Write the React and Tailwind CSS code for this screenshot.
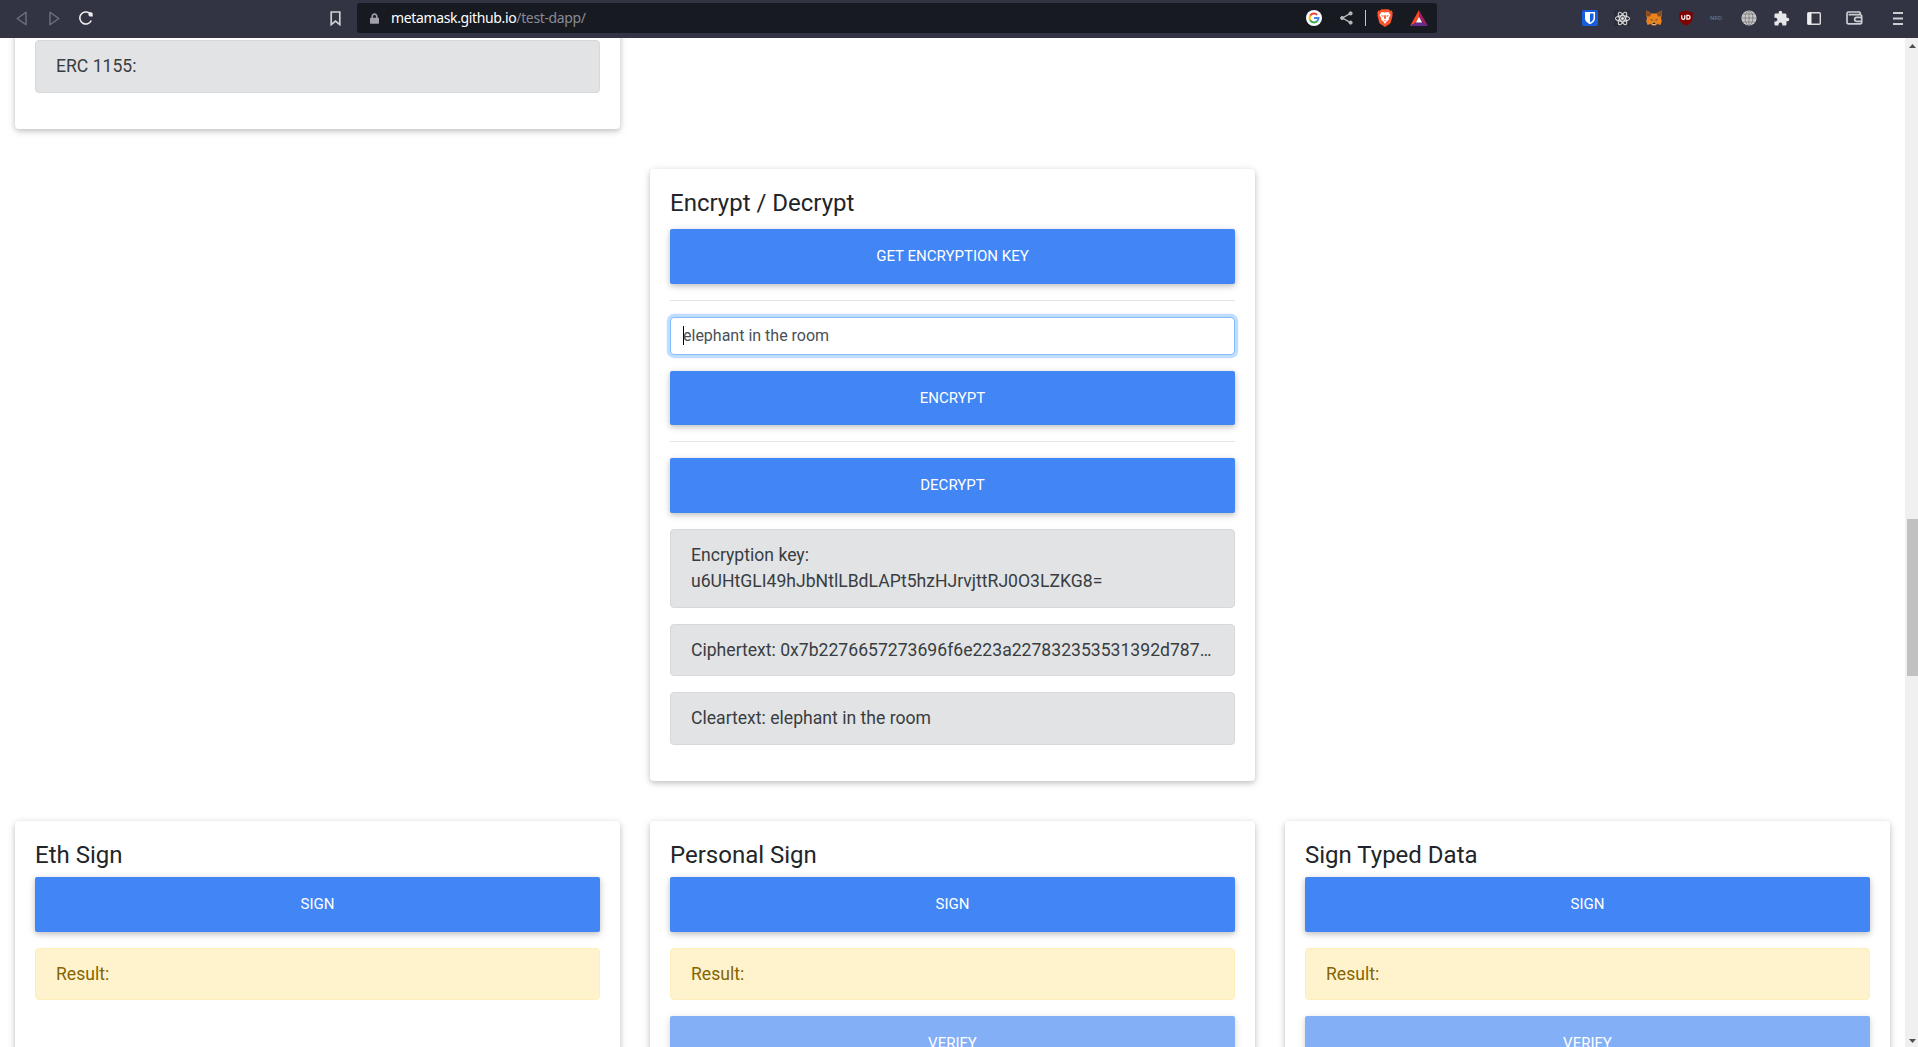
import React from "react";
import { FaReact, FaLock } from "react-icons/fa";
import { MdExtension } from "react-icons/md";

const BUTTON =
  "block w-full rounded-[2px] bg-[#4285f4] px-[38.4px] py-4 text-center text-[15.04px] leading-[22.56px] uppercase text-white shadow-[0_2px_5px_0_rgba(0,0,0,0.16),0_2px_10px_0_rgba(0,0,0,0.12)]";

function Button({ children, disabled }) {
  return (
    <button className={disabled ? `${BUTTON} mb-4 opacity-65` : `${BUTTON} mb-4`} disabled={disabled}>
      {children}
    </button>
  );
}

function Alert({ children, warning }) {
  const tone = warning
    ? "border-[#ffeeba] bg-[#fff3cd] text-[#856404]"
    : "border-[#d6d8db] bg-[#e2e3e5] text-[#383d41]";
  return (
    <div className={`mb-4 rounded border px-5 py-3 text-[17.6px] leading-[26.4px] ${tone}`}>{children}</div>
  );
}

function Card({ children }) {
  return (
    <section className="rounded bg-white p-5 shadow-[0_2px_5px_0_rgba(0,0,0,0.16),0_2px_10px_0_rgba(0,0,0,0.12)]">
      {children}
    </section>
  );
}

function SignCard({ title, verify }) {
  return (
    <Card>
      <h4 className="mb-2 text-2xl leading-[28.8px]">{title}</h4>
      <Button>Sign</Button>
      <Alert warning>Result:</Alert>
      {verify && <Button disabled>Verify</Button>}
    </Card>
  );
}

function Slot({ w, children }) {
  return <span className={`flex shrink-0 items-center justify-center ${w}`}>{children}</span>;
}

function BrowserBar() {
  return (
    <header className="flex h-[38px] shrink-0 items-center bg-[#323443] pb-0.5 text-[#e8e8ea]">
      <div className="flex w-[357px] shrink-0 items-center">
        <svg className="ml-4" width="11" height="15" viewBox="0 0 11 15" fill="none" stroke="#6f717e" strokeWidth="1.4" strokeLinejoin="round">
          <path d="M10 1.2v12.6L1.2 7.5z" />
        </svg>
        <svg className="ml-[22px]" width="11" height="15" viewBox="0 0 11 15" fill="none" stroke="#6f717e" strokeWidth="1.4" strokeLinejoin="round">
          <path d="M1 1.2v12.6L9.8 7.5z" />
        </svg>
        <svg className="ml-[19px]" width="14" height="14" viewBox="0 0 14 14" fill="none">
          <path d="M12.3 9.5A6 6 0 1 1 10.5 2.2" stroke="#eee" strokeWidth="1.6" />
          <path d="M10 1.2h2.500l1.200 1.200v3.200h-3L9.300 4z" fill="#eee" />
        </svg>
        <svg className="ml-[237px]" width="11" height="15" viewBox="0 0 11 15" fill="none" stroke="#d0d0d2" strokeWidth="1.7">
          <path d="M1.2 1h8.600v12.600L5.500 10l-4.300 3.600z" />
        </svg>
      </div>
      <div className="flex h-[30px] w-[1080px] shrink-0 items-center rounded-[3px] bg-[#181a21]">
        <FaLock className="ml-[13px] h-[11px] w-[9px] text-[#a0a1a8]" />
        <span className="ml-3 flex-1 font-['Noto_Sans',sans-serif] text-sm leading-none tracking-[-0.36px] whitespace-nowrap text-[#888b95]">
          <span className="text-white">metamask.github.io</span>/test-dapp/
        </span>
        <Slot w="w-4">
          <svg width="16" height="16" viewBox="0 0 16 16">
            <circle cx="8" cy="8" r="8" fill="#fff" />
            <g fill="none" strokeWidth="2">
              <path d="M4.2 5.6A4.5 4.5 0 0 1 11.2 4.9" stroke="#ea4335" />
              <path d="M4.2 10.3A4.5 4.5 0 0 1 4.2 5.6" stroke="#fbbc05" />
              <path d="M11 11.3A4.5 4.5 0 0 1 4.2 10.3" stroke="#34a853" />
              <path d="M8 8h4.5A4.5 4.5 0 0 1 11 11.3" stroke="#4285f4" />
            </g>
          </svg>
        </Slot>
        <svg className="ml-[18px]" width="13" height="14" viewBox="0 0 13 14" fill="#b8b9bd" stroke="#b8b9bd">
          <path d="M10.5 2.3 2.5 7l8 4.7" fill="none" strokeWidth="1.4" />
          <circle cx="10.6" cy="2.4" r="1.6" />
          <circle cx="2.2" cy="7" r="1.6" />
          <circle cx="10.6" cy="11.6" r="1.6" />
        </svg>
        <span className="ml-3 h-4 w-px bg-[#c6c6c9]" />
        <Slot w="ml-[11px] w-4">
          <svg width="16" height="18" viewBox="0 0 16 18">
            <path d="M4.4.3h7.2l1.5 1.5 1.6-.2 1.1 2.4-.5 1.3.3 1.3-1.9 7.1-1.1 1.4L8 18l-4.6-2.9-1.1-1.4L.4 6.6l.3-1.3L.2 4l1.1-2.4 1.6.2z" fill="#fb542b" />
            <path d="M4.6 3.1 8 3.6l3.4-.5 2.2 2.9-2 3.3.4 1.3-2.4 1.8L8 14.9l-1.6-2.5L4 10.6l.4-1.3-2-3.3z" fill="#fff" />
            <path d="m3.9 6 2.8.8-.8 1.2zM12.1 6l-2.8.8.8 1.2zM7.2 6.2h1.6L9 9.4l-1 .7-1-.7zM6 10.5l2 1 2-1-2 1.8z" fill="#fb542b" />
          </svg>
        </Slot>
        <svg className="mr-[9px] ml-[17px]" width="18" height="16" viewBox="0 0 18 16">
          <path d="M9 0 0 16l5.9-3.6L9 6.8z" fill="#ff4724" />
          <path d="M9 0v6.8l3.1 5.6L18 16z" fill="#9e1f63" />
          <path d="m0 16 5.9-3.6h6.2L18 16z" fill="#662d91" />
          <path d="m9 6.8 3.1 5.6H5.9z" fill="#fff" />
        </svg>
      </div>
      <div className="flex flex-1 items-center">
        <svg className="ml-[145px]" width="16" height="16" viewBox="0 0 16 16">
          <rect width="16" height="16" rx="2" fill="#175ddc" />
          <path d="M3 2h10v6.3c0 3.1-2.6 4.7-5 5.9-2.4-1.2-5-2.8-5-5.9z" fill="#fff" />
          <path d="M8 3.6h3.5v4.7c0 2-1.7 3.2-3.5 4.2z" fill="#175ddc" />
        </svg>
        <span className="ml-4 flex size-4 items-center justify-center bg-[#2a2d37]">
          <FaReact className="size-[15px] stroke-[#eee] stroke-[12px] text-[#eee]" />
        </span>
        <svg className="ml-4" width="16" height="16" viewBox="0 0 16 16">
          <path d="m.4.6 5.400 3h4.400l5.400-3 .2 4.400-.8 3 .8 3.200-1.300 3.700-3.200-.8-1.800 1.400H6.500l-1.800-1.400-3.200.8L.2 11.200 1 8 .2 5z" fill="#e8821e" />
          <path d="m.4.6 5 3L4 6.600.7 6.300.2 4.500zM15.600.6l-5 3 1.400 3 3.300-.3.5-1.800z" fill="#8a4b20" />
          <path d="m4 9 2.500.8-.2 1.100zM12 9l-2.500.8.200 1.100z" fill="#35333a" />
          <path d="m6 13.200.7-.6h2.600l.7.600-.4 1.900H6.400z" fill="#c9b9ab" />
          <path d="M6.800 12.800h2.400l.3 1.200h-3z" fill="#222" />
        </svg>
        <svg className="ml-4" width="16" height="16" viewBox="0 0 16 16">
          <path d="M8 .2c2 1.300 4 1.700 6.600 1.800v6.300c0 3.400-2.900 5.700-6.600 7.500-3.700-1.800-6.600-4.100-6.600-7.500V2C4 1.900 6 1.500 8 .2z" fill="#800000" />
          <path d="M3.800 5.300v2.600c0 .8.600 1.400 1.500 1.400s1.500-.6 1.500-1.400V5.300M8.900 5.400v3.800h1.200a1.900 1.900 0 0 0 0-3.800z" fill="none" stroke="#fff" strokeWidth="1.2" />
        </svg>
        <Slot w="ml-[14px] w-4">
          <span className="font-['Roboto',sans-serif] text-[6px] leading-none text-[#777985]">NRD</span>
        </Slot>
        <svg className="ml-[17px]" width="16" height="16" viewBox="0 0 16 16">
          <circle cx="8" cy="8" r="7.6" fill="#c8c8c8" />
          <path d="M8 .5v15M.5 8h15M1.900 4h12.200M1.900 12h12.200" stroke="#777" strokeWidth=".8" />
          <ellipse cx="8" cy="8" rx="3.8" ry="7.4" fill="none" stroke="#777" strokeWidth=".8" />
        </svg>
        <MdExtension className="ml-4 size-[17px] text-[#e6e6e8]" />
        <svg className="ml-[17px]" width="14" height="13" viewBox="0 0 14 13">
          <rect x=".7" y=".7" width="12.6" height="11.6" rx="1" fill="none" stroke="#ddd" strokeWidth="1.4" />
          <path d="M1 1h3.500v11H1z" fill="#eee" />
        </svg>
        <svg className="ml-[25px]" width="17" height="14" viewBox="0 0 17 14" fill="none" stroke="#cdced2" strokeWidth="1.7">
          <path d="M14.300 4.500V2.500A1.500 1.500 0 0 0 12.500 1h-10A1.500 1.500 0 0 0 1 2.500v8.900a1.500 1.500 0 0 0 1.500 1.500h11.700a1.500 1.500 0 0 0 1.500-1.500V5.200a1.500 1.500 0 0 0-1.500-1.500H2.600" />
          <path d="M16 6.300h-5.300a2 2 0 0 0 0 4.100H16" />
        </svg>
        <svg className="ml-[30px]" width="10" height="13" viewBox="0 0 10 13" stroke="#cdced2" strokeWidth="1.8">
          <path d="M0 1h10M0 6.500h10M0 12h10" />
        </svg>
      </div>
    </header>
  );
}

function Scrollbar() {
  return (
    <div className="flex w-[13px] shrink-0 flex-col items-end bg-[#f0f0f0]">
      <svg className="mt-[6px] mr-[2px]" width="7" height="4" viewBox="0 0 7 4" fill="#505050">
        <path d="M3.5 0 7 4H0z" />
      </svg>
      <div className="mt-[471px] h-[157px] w-[11px] bg-[#c1c1c1]" />
      <svg className="mt-auto mr-[2px] mb-[4px]" width="7" height="4" viewBox="0 0 7 4" fill="#505050">
        <path d="M3.5 4 7 0H0z" />
      </svg>
    </div>
  );
}

export default function App() {
  return (
    <div className="flex h-[1047px] w-[1918px] flex-col overflow-hidden bg-white font-['Roboto',sans-serif] text-base font-normal text-[#212529]">
      <BrowserBar />
      <div className="flex min-h-0 flex-1">
        <main className="min-w-0 flex-1 overflow-hidden px-[15px]">
          <div className="-mt-[38.7px] grid grid-cols-3 gap-x-[30px] gap-y-10">
            <Card>
              <div className="h-[20.8px]" />
              <Alert>ERC 1155:</Alert>
            </Card>

            <div className="col-start-2 row-start-2">
              <Card>
                <h4 className="mb-3 text-2xl leading-[28.8px]">Encrypt / Decrypt</h4>
                <Button>Get Encryption Key</Button>
                <hr className="my-4 border-black/10" />
                <div className="mb-4 flex h-[38px] items-center rounded border border-[#80bdff] bg-white px-3 leading-6 text-[#495057] shadow-[0_0_0_3.2px_rgba(0,123,255,0.25)]">
                  <span className="h-[19px] w-px bg-black" />
                  <span className="-ml-px">elephant in the room</span>
                </div>
                <Button>Encrypt</Button>
                <hr className="my-4 border-black/10" />
                <Button>Decrypt</Button>
                <Alert>
                  <p>Encryption key:</p>
                  <p>u6UHtGLI49hJbNtlLBdLAPt5hzHJrvjttRJ0O3LZKG8=</p>
                </Alert>
                <Alert>
                  <p className="truncate">
                    Ciphertext: 0x7b2276657273696f6e223a227832353531392d7873616c736132302d706f6c7931333035222c
                  </p>
                </Alert>
                <Alert>Cleartext: elephant in the room</Alert>
              </Card>
            </div>

            <div className="row-start-3 grid">
              <SignCard title="Eth Sign" />
            </div>
            <div className="row-start-3">
              <SignCard title="Personal Sign" verify />
            </div>
            <div className="row-start-3">
              <SignCard title="Sign Typed Data" verify />
            </div>
          </div>
        </main>
        <Scrollbar />
      </div>
    </div>
  );
}
